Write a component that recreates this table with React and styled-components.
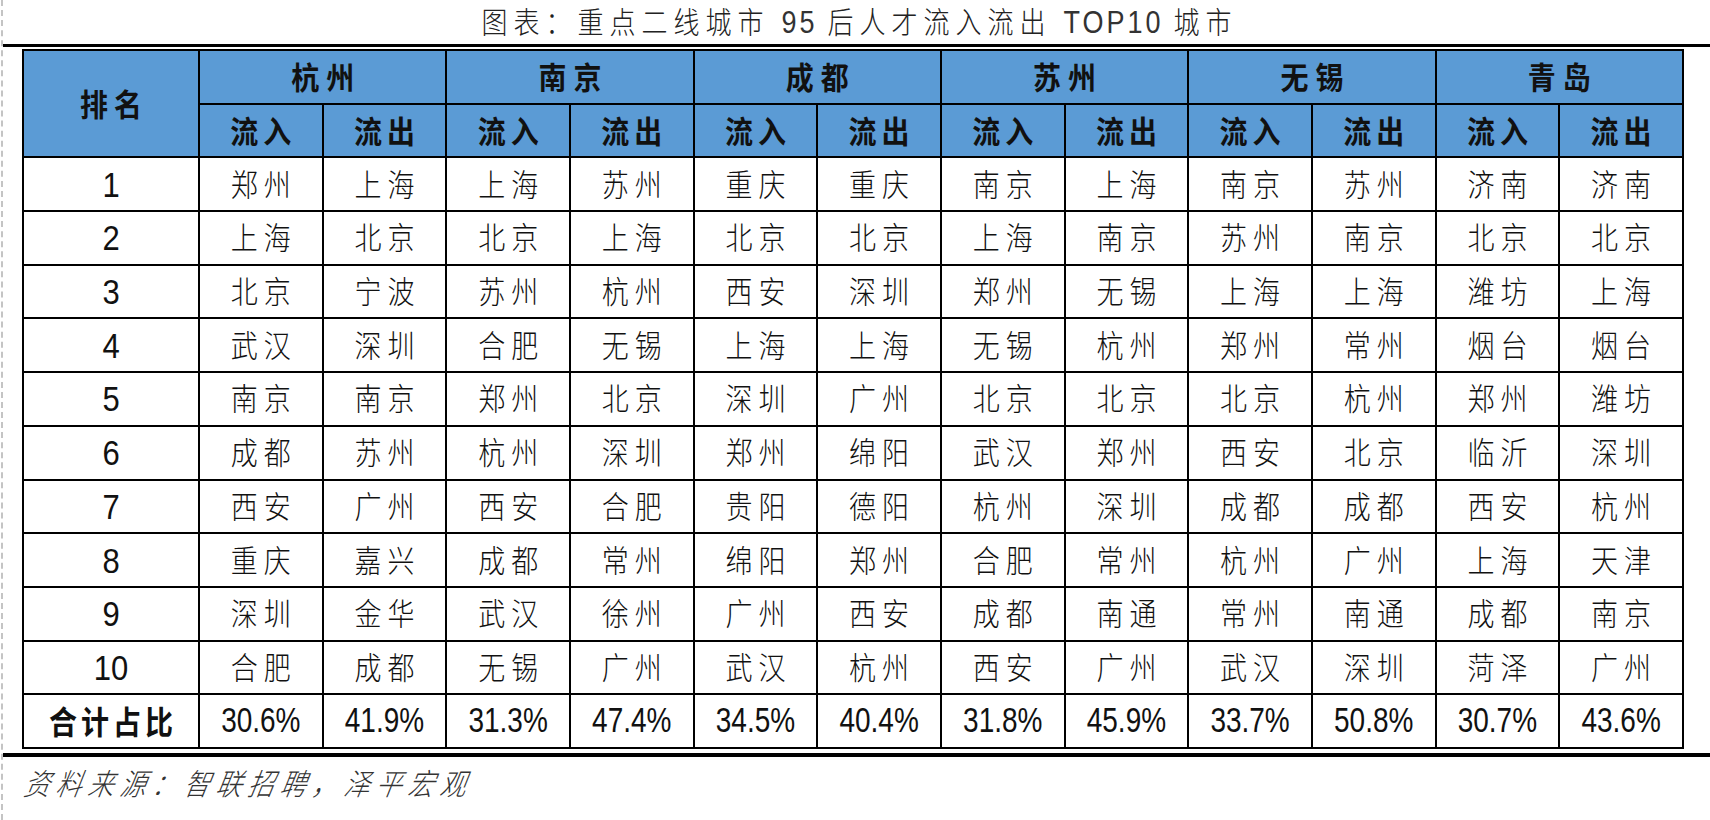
import React from "react";
import styled, { createGlobalStyle } from "styled-components";

const GlobalStyle = createGlobalStyle`
  html, body { margin: 0; padding: 0; background: #ffffff; }
  body { width: 1710px; height: 820px; overflow: hidden; }
`;

const cjk = `"Noto Sans CJK SC", "Noto Sans", sans-serif`;
const latin = `"Liberation Sans", Arial, "Noto Sans CJK SC", sans-serif`;

const Page = styled.div`
  margin-left: 1px;
  height: 820px;
  border-left: 2px dashed #c4c4c4;
  display: flex;
  flex-direction: column;
  box-sizing: border-box;
`;

const TitleBar = styled.div`
  height: 44px;
  display: flex;
  align-items: center;
  justify-content: center;
`;

const Glyphs = styled.span`
  display: inline-block;
  font-family: ${(p) => (p.$latin ? latin : cjk)};
  font-size: ${(p) => p.$size}px;
  font-weight: ${(p) => p.$weight || 300};
  font-style: ${(p) => (p.$italic ? "italic" : "normal")};
  letter-spacing: ${(p) => p.$spacing || 0}px;
  padding-left: ${(p) => p.$spacing || 0}px;
  color: ${(p) => p.$color || "#111"};
  line-height: 1;
  white-space: nowrap;
  transform: scaleY(${(p) => p.$stretch || 1.15}) ${(p) => (p.$italic ? "skewX(-12deg)" : "")};
`;

const Latin = styled.span`
  font-family: ${latin};
  font-weight: 400;
  font-size: 27px;
  letter-spacing: 3px;
  color: #333;
  margin: 0 10px 0 12px;
`;

const Rule = styled.div`
  height: ${(p) => p.$thick}px;
  background: #000;
  flex: none;
`;

const TableWrap = styled.div`
  padding-left: 19px;
  margin-top: ${(p) => p.$top}px;
  margin-bottom: 4px;
`;

const Table = styled.table`
  border-collapse: collapse;
  table-layout: fixed;
  width: 1662px;
  border: 2px solid #000;
`;

const Row = styled.tr`
  height: 53.7px;
`;

const Cell = styled.td`
  border: 2px solid #000;
  padding: 0;
  text-align: center;
  vertical-align: middle;
  background: ${(p) => (p.$head ? "#5b9bd5" : "#ffffff")};
  overflow: hidden;
`;

const Source = styled.div`
  padding: 12px 0 0 16px;
`;

const cities = ["杭州", "南京", "成都", "苏州", "无锡", "青岛"];

const rows = [
  ["郑州", "上海", "上海", "苏州", "重庆", "重庆", "南京", "上海", "南京", "苏州", "济南", "济南"],
  ["上海", "北京", "北京", "上海", "北京", "北京", "上海", "南京", "苏州", "南京", "北京", "北京"],
  ["北京", "宁波", "苏州", "杭州", "西安", "深圳", "郑州", "无锡", "上海", "上海", "潍坊", "上海"],
  ["武汉", "深圳", "合肥", "无锡", "上海", "上海", "无锡", "杭州", "郑州", "常州", "烟台", "烟台"],
  ["南京", "南京", "郑州", "北京", "深圳", "广州", "北京", "北京", "北京", "杭州", "郑州", "潍坊"],
  ["成都", "苏州", "杭州", "深圳", "郑州", "绵阳", "武汉", "郑州", "西安", "北京", "临沂", "深圳"],
  ["西安", "广州", "西安", "合肥", "贵阳", "德阳", "杭州", "深圳", "成都", "成都", "西安", "杭州"],
  ["重庆", "嘉兴", "成都", "常州", "绵阳", "郑州", "合肥", "常州", "杭州", "广州", "上海", "天津"],
  ["深圳", "金华", "武汉", "徐州", "广州", "西安", "成都", "南通", "常州", "南通", "成都", "南京"],
  ["合肥", "成都", "无锡", "广州", "武汉", "杭州", "西安", "广州", "武汉", "深圳", "菏泽", "广州"],
];

const totals = ["30.6%", "41.9%", "31.3%", "47.4%", "34.5%", "40.4%", "31.8%", "45.9%", "33.7%", "50.8%", "30.7%", "43.6%"];

export default function App() {
  return (
    <>
      <GlobalStyle />
      <Page>
        <TitleBar>
          <Glyphs $size={26} $spacing={6} $color="#222">
            图表：重点二线城市<Latin>95</Latin>后人才流入流出<Latin>TOP10</Latin>城市
          </Glyphs>
        </TitleBar>
        <Rule $thick={3} />
        <TableWrap $top={2}>
          <Table>
            <colgroup>
              <col style={{ width: 176 }} />
              {Array.from({ length: 12 }).map((_, i) => (
                <col key={i} />
              ))}
            </colgroup>
            <tbody>
              <Row>
                <Cell $head rowSpan={2}>
                  <Glyphs $size={28} $weight={700} $spacing={6} $stretch={1.1}>排名</Glyphs>
                </Cell>
                {cities.map((c) => (
                  <Cell $head colSpan={2} key={c}>
                    <Glyphs $size={28} $weight={700} $spacing={7} $stretch={1.1}>{c}</Glyphs>
                  </Cell>
                ))}
              </Row>
              <Row>
                {cities.map((c) => (
                  <React.Fragment key={c}>
                    <Cell $head>
                      <Glyphs $size={28} $weight={700} $spacing={5} $stretch={1.1}>流入</Glyphs>
                    </Cell>
                    <Cell $head>
                      <Glyphs $size={28} $weight={700} $spacing={5} $stretch={1.1}>流出</Glyphs>
                    </Cell>
                  </React.Fragment>
                ))}
              </Row>
              {rows.map((r, i) => (
                <Row key={i}>
                  <Cell>
                    <Glyphs $latin $size={31} $weight={400} $stretch={1.15}>{i + 1}</Glyphs>
                  </Cell>
                  {r.map((v, j) => (
                    <Cell key={j}>
                      <Glyphs $size={27} $spacing={6} $stretch={1.12}>{v}</Glyphs>
                    </Cell>
                  ))}
                </Row>
              ))}
              <Row>
                <Cell>
                  <Glyphs $size={28} $weight={700} $spacing={4}>合计占比</Glyphs>
                </Cell>
                {totals.map((t, j) => (
                  <Cell key={j}>
                    <Glyphs $latin $size={28} $weight={400} $stretch={1.22}>{t}</Glyphs>
                  </Cell>
                ))}
              </Row>
            </tbody>
          </Table>
        </TableWrap>
        <Rule $thick={4} />
        <Source>
          <Glyphs $size={26} $spacing={6} $italic $color="#333">资料来源：智联招聘，泽平宏观</Glyphs>
        </Source>
      </Page>
    </>
  );
}
